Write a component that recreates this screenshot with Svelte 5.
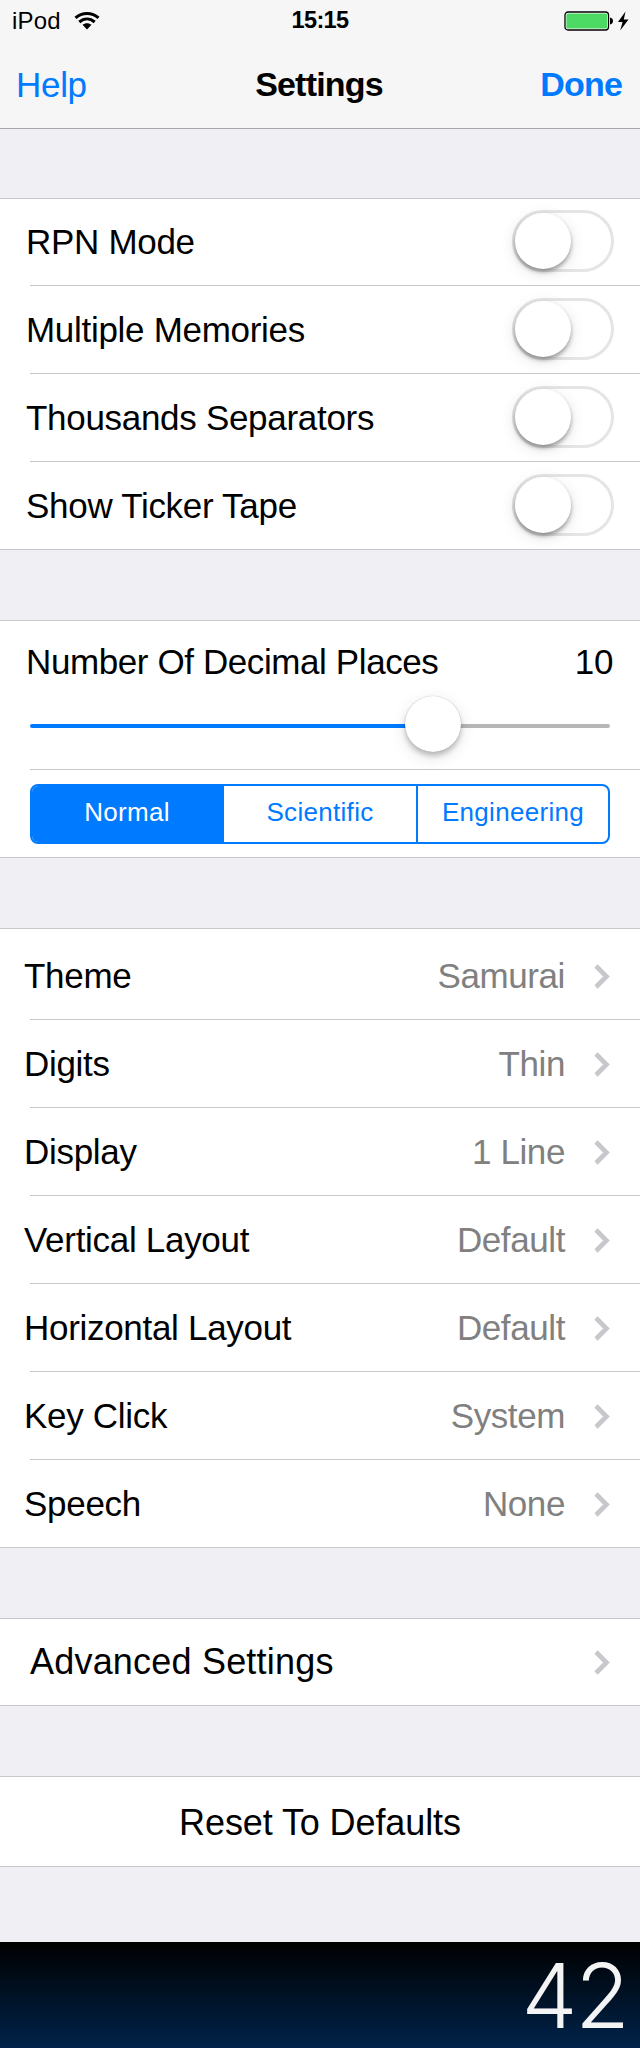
<script lang="ts">
  let switches = $state([
    { label: "RPN Mode", on: false },
    { label: "Multiple Memories", on: false },
    { label: "Thousands Separators", on: false },
    { label: "Show Ticker Tape", on: false },
  ]);

  const formats = ["Normal", "Scientific", "Engineering"];
  let format = $state("Normal");

  let decimals = $state(10);
  const position = 69.5;

  const options = [
    { label: "Theme", value: "Samurai" },
    { label: "Digits", value: "Thin" },
    { label: "Display", value: "1 Line" },
    { label: "Vertical Layout", value: "Default" },
    { label: "Horizontal Layout", value: "Default" },
    { label: "Key Click", value: "System" },
    { label: "Speech", value: "None" },
  ];
</script>

{#snippet chevron()}
  <svg class="chevron" width="16" height="25" viewBox="0 0 16 25">
    <path d="M2 2L12.5 12.5L2 23" fill="none" stroke="#c7c7cc" stroke-width="4.6" />
  </svg>
{/snippet}

<div class="screen">
  <header>
    <div class="status">
      <div class="carrier">
        <span>iPod</span>
        <svg width="26" height="20" viewBox="0 0 26 20">
          <g fill="none" stroke="#000" stroke-width="3">
            <path d="M1.5 6.8C8 .9 18 .9 24.5 6.8" />
            <path d="M5.3 11C10 6.9 16 6.9 20.7 11" />
          </g>
          <path d="M8.5 13.7C11 11.6 15 11.6 17.5 13.7L13 18.4Z" fill="#000" />
        </svg>
      </div>
      <span class="time">15:15</span>
      <div class="power">
        <svg width="65" height="20" viewBox="0 0 65 20">
          <rect x="1" y="1" width="43.5" height="18" rx="3" fill="#fff" stroke="#000" stroke-width="1.3" />
          <rect x="2.4" y="2.4" width="40.7" height="15.2" rx="1.5" fill="#4cd964" />
          <path d="M46 6.5C50 7 50 13 46 13.5Z" fill="#000" />
          <path d="M61.5 .5L54 11H58.6L56.2 19.5L64.5 8.5H59.8Z" fill="#000" />
        </svg>
      </div>
    </div>
    <nav>
      <button class="help">Help</button>
      <h1>Settings</h1>
      <button class="done">Done</button>
    </nav>
  </header>

  <main>
    <section class="group">
      {#each switches as item}
        <div class="row">
          <span class="label">{item.label}</span>
          <button
            class="switch"
            class:on={item.on}
            aria-label={item.label}
            onclick={() => (item.on = !item.on)}
          ><span class="knob"></span></button>
        </div>
      {/each}
    </section>

    <section class="group">
      <div class="row decimals">
        <div class="caption">
          <span class="label">Number Of Decimal Places</span>
          <span class="label">{decimals}</span>
        </div>
        <div class="slider">
          <div class="fill" style="width: {position}%"></div>
          <span class="knob"></span>
          <div class="rest"></div>
        </div>
      </div>
      <div class="row">
        <div class="segments">
          {#each formats as name}
            <button class:selected={format === name} onclick={() => (format = name)}>{name}</button>
          {/each}
        </div>
      </div>
    </section>

    <section class="group options">
      {#each options as option}
        <div class="row">
          <span class="label">{option.label}</span>
          <span class="value">{option.value}</span>
          {@render chevron()}
        </div>
      {/each}
    </section>

    <section class="group">
      <div class="row advanced">
        <span class="label">Advanced Settings</span>
        {@render chevron()}
      </div>
    </section>

    <section class="group">
      <div class="row reset">
        <span class="label">Reset To Defaults</span>
      </div>
    </section>
  </main>

  <footer><span>42</span></footer>
</div>

<style>
  :global(body) {
    background: #efeff4;
  }
  .screen {
    width: 640px;
    height: 2048px;
    display: flex;
    flex-direction: column;
    background: #efeff4;
    color: #000;
    font-family: "Liberation Sans", Arial, sans-serif;
    font-size: 35px;
    overflow: hidden;
  }
  button {
    padding: 0;
    border: 0;
    background: none;
    color: #007aff;
    font: inherit;
    cursor: pointer;
  }
  header {
    height: 128px;
    background: #f6f6f6;
    border-bottom: 1px solid #a7a7ab;
  }
  .status {
    height: 41px;
    display: grid;
    grid-template-columns: 1fr auto 1fr;
    align-items: center;
    font-size: 24px;
  }
  .status svg {
    display: block;
  }
  .carrier {
    display: flex;
    align-items: center;
    gap: 13px;
    padding-left: 12px;
    letter-spacing: 0.2px;
  }
  .time {
    font-size: 23.5px;
    font-weight: bold;
    letter-spacing: -0.6px;
  }
  .power {
    display: flex;
    justify-content: flex-end;
    padding-right: 11px;
  }
  nav {
    height: 87px;
    display: grid;
    grid-template-columns: 1fr auto 1fr;
    align-items: center;
    padding: 0 18px 0 16px;
  }
  .help {
    justify-self: start;
    letter-spacing: -0.3px;
  }
  .done {
    justify-self: end;
    font-weight: bold;
    font-size: 34px;
    letter-spacing: -0.8px;
  }
  h1 {
    margin: 0;
    font-size: 34px;
    letter-spacing: -0.8px;
  }
  main {
    flex: 1;
    display: flex;
    flex-direction: column;
    gap: 70px;
    padding-top: 69px;
  }
  .group {
    background: #fff;
    box-shadow: inset 0 1px 0 #c8c7cc;
  }
  .row {
    box-sizing: border-box;
    height: 88px;
    display: flex;
    align-items: center;
    padding: 0 26px 2px;
    background: linear-gradient(#c8c7cc, #c8c7cc) 30px 100% / 100% 1px no-repeat;
  }
  .row:last-child {
    background-position: 0 100%;
  }
  .label {
    flex: 1;
    padding-top: 2px;
    letter-spacing: -0.3px;
    white-space: nowrap;
  }
  .knob {
    width: 56px;
    height: 56px;
    flex-shrink: 0;
    border-radius: 50%;
    background: #fff;
  }
  .switch {
    box-sizing: border-box;
    width: 102px;
    height: 62px;
    display: flex;
    border: 3px solid #e5e5e5;
    border-radius: 31px;
  }
  .switch .knob {
    box-shadow: 0 3px 4px rgba(0, 0, 0, 0.34), 0 4px 16px rgba(0, 0, 0, 0.12);
  }
  .switch.on {
    justify-content: flex-end;
    border-color: #4cd964;
    background: #4cd964;
  }
  .decimals {
    height: 150px;
    flex-direction: column;
    align-items: stretch;
    padding: 20px 30px 0;
  }
  .caption {
    display: flex;
    margin: 0 -3px 0 -4px;
  }
  .caption .label {
    letter-spacing: -0.4px;
  }
  .caption .label:last-child {
    flex: none;
  }
  .slider {
    height: 56px;
    display: flex;
    align-items: center;
    margin-top: 14px;
  }
  .fill,
  .rest {
    height: 4px;
    border-radius: 2px;
    margin-top: 4px;
  }
  .fill {
    margin-right: -28px;
    background: #007aff;
  }
  .rest {
    flex: 1;
    margin-left: -4px;
    background: #b7b7b7;
  }
  .slider .knob {
    z-index: 1;
    box-shadow: 0 0 1px rgba(0, 0, 0, 0.3), 0 4px 5px rgba(0, 0, 0, 0.2), 0 5px 16px rgba(0, 0, 0, 0.12);
  }
  .segments {
    box-sizing: border-box;
    width: 580px;
    height: 60px;
    display: grid;
    grid-template-columns: 190px 194px 192px;
    margin: 2px 0 0 4px;
    border: 2px solid #007aff;
    border-radius: 8px;
    overflow: hidden;
  }
  .segments button {
    padding-bottom: 4px;
    font-size: 26px;
    letter-spacing: 0.3px;
  }
  .segments button + button {
    border-left: 2px solid #007aff;
  }
  .segments .selected {
    background: #007aff;
    color: #fff;
  }
  .options .row,
  .advanced {
    padding-right: 30px;
    padding-left: 24px;
  }
  .options .row:first-child {
    height: 92px;
    padding-top: 4px;
  }
  .value {
    padding-top: 2px;
    margin-right: 29px;
    color: #808080;
    letter-spacing: -0.4px;
  }
  .chevron {
    margin-top: 3px;
  }
  .advanced,
  .reset {
    font-size: 36px;
  }
  .row.advanced {
    padding-left: 30px;
  }
  .advanced .label {
    letter-spacing: 0.2px;
  }
  .reset {
    height: 91px;
    justify-content: center;
    padding: 0;
  }
  .reset .label {
    flex: none;
    letter-spacing: -0.1px;
  }
  footer {
    height: 106px;
    display: flex;
    align-items: center;
    justify-content: flex-end;
    padding-right: 12px;
    background: linear-gradient(#000, #00234a);
    color: #f4f4f4;
    font-family: Inter, "Liberation Sans", sans-serif;
    font-size: 89px;
    font-weight: 300;
    line-height: 1;
    letter-spacing: -2px;
  }
</style>
